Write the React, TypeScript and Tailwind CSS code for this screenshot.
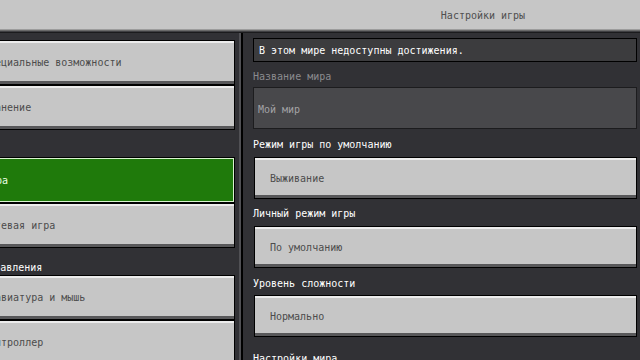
import React from 'react';

const mono = { fontFamily: '"DejaVu Sans Mono", "Liberation Mono", monospace' };

const SideButton = ({ label, active }: any) => {
    if (active) {
        return (
            <div className="h-[46px] shrink-0 border border-black">
                <div className="h-full border border-[#d9f2cf] bg-[#1f7a0b] flex items-center pl-[62px] pt-[1px] text-[10px] leading-[12px] text-[#eaffe2]">
                    {label}
                </div>
            </div>
        );
    }
    return (
        <div className="h-[45px] shrink-0 border border-black">
            <div className="h-full bg-[#c6c6c6] border-t-2 border-t-[#ececec] border-b-[3px] border-b-[#58585a] flex items-center pl-[62px] pt-[2px] text-[10px] leading-[12px] text-[#4c4c4c]">
                {label}
            </div>
        </div>
    );
};

const SideHeader = ({ label }: any) => (
    <div className="h-[27px] shrink-0 flex items-end pb-[1px] pl-[8px] text-[10px] leading-[12px] text-white">
        {label}
    </div>
);

const Label = ({ text, h, pt, muted }: any) => (
    <div className={`${h} ${pt} shrink-0 text-[10px] leading-[12px] ${muted ? 'text-[#8b8b8f]' : 'text-white'}`}>
        {text}
    </div>
);

const Dropdown = ({ value }: any) => (
    <div className="h-[42px] shrink-0 border border-black ml-[1px]">
        <div className="h-full bg-[#c6c6c6] border-t-2 border-t-[#ececec] border-b-[3px] border-b-[#58585a] flex items-center pl-[15px] pt-[3px] text-[10px] leading-[12px] text-[#4c4c4c]">
            {value}
        </div>
    </div>
);

export default function App() {
    return (
        <div className="w-[640px] h-[360px] overflow-hidden bg-[#313135] flex flex-col" style={mono}>
            <div className="h-[29px] shrink-0 bg-[#c6c6c6] flex items-center justify-center pl-[326px] pt-[3px] text-[10px] leading-[12px] text-[#4f4f4f]">
                Настройки игры
            </div>
            <div className="h-[1px] shrink-0 bg-[#9c9c9c]" />
            <div className="h-[1px] shrink-0 bg-[#6a6a6a]" />
            <div className="h-[1px] shrink-0 bg-[#3f3f42]" />
            <div className="h-[1px] shrink-0 bg-[#1b1b1d]" />

            <div className="flex flex-1 min-h-0">
                <div className="w-[239px] shrink-0 overflow-hidden pt-[7px]">
                    <div className="w-[315px] -ml-[80px] flex flex-col">
                        <SideButton label="Специальные возможности" />
                        <SideButton label="Хранение" />
                        <SideHeader label="Мир" />
                        <SideButton label="Игра" active />
                        <SideButton label="Сетевая игра" />
                        <SideHeader label="Элементы управления" />
                        <SideButton label="Клавиатура и мышь" />
                        <SideButton label="Контроллер" />
                    </div>
                </div>
                <div className="w-[2px] shrink-0 bg-[#505054]" />
                <div className="w-[2px] shrink-0 bg-black" />

                <div className="flex-1 min-w-0 pl-[10px] pr-[3px] pt-[5px] flex flex-col">
                    <div className="h-[24px] shrink-0 border border-black bg-[#3c3c3e] flex items-center pl-[5px] pt-[1px] text-[10px] leading-[12px] text-white">
                        В этом мире недоступны достижения.
                    </div>
                    <Label text="Название мира" h="h-[25px]" pt="pt-[9px]" muted />
                    <div className="h-[42px] shrink-0 border border-[#1c1c1e] bg-[#48484b] flex items-center pl-[4px] pt-[3px] text-[10px] leading-[12px] text-[#a3a3a6]">
                        Мой мир
                    </div>
                    <Label text="Режим игры по умолчанию" h="h-[28px]" pt="pt-[10px]" />
                    <Dropdown value="Выживание" />
                    <Label text="Личный режим игры" h="h-[27px]" pt="pt-[9px]" />
                    <Dropdown value="По умолчанию" />
                    <Label text="Уровень сложности" h="h-[27px]" pt="pt-[10px]" />
                    <Dropdown value="Нормально" />
                    <Label text="Настройки мира" h="h-[30px]" pt="pt-[16px]" />
                </div>
            </div>
        </div>
    );
}
